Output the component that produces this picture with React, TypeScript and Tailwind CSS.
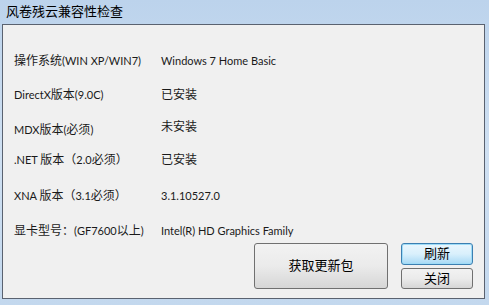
import React from "react";

const rows: { label: string; value: string; valueShift?: string }[] = [
  { label: "操作系统(WIN XP/WIN7)", value: "Windows 7 Home Basic" },
  { label: "DirectX版本(9.0C)", value: "已安装" },
  { label: "MDX版本(必须)", value: "未安装", valueShift: "-mt-[6px]" },
  { label: ".NET 版本（2.0必须）", value: "已安装" },
  { label: "XNA 版本（3.1必须）", value: "3.1.10527.0" },
  { label: "显卡型号：(GF7600以上)", value: "Intel(R) HD Graphics Family" },
];

const rowMargins = ["mt-[26px]", "mt-[14px]", "mt-[15px]", "mt-[10px]", "mt-[16px]", "mt-[15px]"];

// latin runs are drawn a bit smaller, like the system UI font
function Mixed({ text }: { text: string }) {
  const parts = text.match(/[\x20-\x7e]+|[^\x20-\x7e]+/g) ?? [];
  return (
    <>
      {parts.map((p, i) =>
        /^[\x20-\x7e]+$/.test(p) ? (
          <span key={i} className="text-[11px]">{p}</span>
        ) : (
          <span key={i}>{p}</span>
        )
      )}
    </>
  );
}

export default function App() {
  return (
    <div
      className="w-[489px] h-[305px] overflow-hidden bg-gradient-to-b from-[#bcd3ec] via-[#cfe0f2] to-[#c3d8ee] text-[12px] text-[#1a1a1a]"
      style={{ fontFamily: 'Lato, "Noto Sans CJK SC", sans-serif' }}
    >
      {/* title bar */}
      <div className="h-[24px] flex items-center pl-[6px] text-[13px] text-black">
        风卷残云兼容性检查
      </div>

      {/* client area */}
      <div className="ml-[2px] w-[483px] h-[275px] border border-[#5a6270] bg-[#f0f0f0] flex flex-col">
        {rows.map((r, i) => (
          <div key={r.label} className={`${rowMargins[i]} h-[20px] flex items-center`}>
            <div className="w-[158px] pl-[11px]">
              <Mixed text={r.label} />
            </div>
            <div className={r.valueShift ?? ""}>
              <Mixed text={r.value} />
            </div>
          </div>
        ))}

        <div className="mt-[2px] flex justify-end gap-[13px] pr-[11px]">
          <button className="w-[134px] h-[46px] rounded-[3px] border border-[#707070] bg-gradient-to-b from-[#f2f2f2] via-[#ebebeb] to-[#d6d6d6] text-[13px] text-black">
            获取更新包
          </button>
          <div className="flex flex-col gap-[3px]">
            <button className="w-[72px] h-[22px] rounded-[3px] border border-[#3c7fb1] bg-gradient-to-b from-[#eaf6fd] via-[#d9f0fc] to-[#a7d9f5] text-[13px] text-black shadow-[inset_0_0_0_1px_#9fdcf7]">
              刷新
            </button>
            <button className="w-[72px] h-[21px] rounded-[3px] border border-[#707070] bg-gradient-to-b from-[#f2f2f2] via-[#ebebeb] to-[#d6d6d6] text-[13px] text-black">
              关闭
            </button>
          </div>
        </div>
      </div>
    </div>
  );
}
